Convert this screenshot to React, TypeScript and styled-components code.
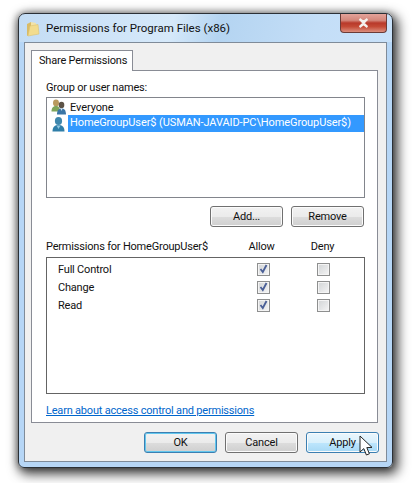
import React from "react";
import styled, { createGlobalStyle } from "styled-components";

const GlobalStyle = createGlobalStyle`
  html, body {
    margin: 0;
    padding: 0;
    width: 414px;
    height: 483px;
    overflow: hidden;
    background: #fff;
    font-family: Roboto, "Open Sans", sans-serif;
    font-size: 11px;
    letter-spacing: -0.2px;
    color: #111;
  }
`;

const Page = styled.div`
  padding: 13px 21px 15px 18px;
  width: 375px;
  height: 455px;
`;

const Frame = styled.div`
  box-sizing: border-box;
  width: 375px;
  height: 455px;
  display: flex;
  flex-direction: column;
  padding: 0 5px 5px 5px;
  border: 1px solid #2b3036;
  border-radius: 7px 7px 6px 6px;
  background:
    linear-gradient(#0000 0, #0000 28px, #b6d6f6 28px),
    linear-gradient(104deg, #c3dcf4 0%, #d6e9fa 32%, #b4d4f1 42%, #c4def7 62%, #cfe5fb 100%);
  box-shadow: 3px 4px 12px 2px rgba(0, 0, 0, 0.75), -1px 0 7px rgba(0, 0, 0, 0.35);
`;

const TitleBar = styled.div`
  height: 28px;
  flex: none;
  display: flex;
  align-items: flex-start;
  gap: 6px;
`;

const TitleIcon = styled.svg`
  width: 14px;
  height: 16px;
  margin: 7px 0 0 2px;
`;

const TitleText = styled.div`
  margin-top: 7px;
  font-size: 11.5px;
  letter-spacing: 0;
  white-space: nowrap;
`;

const CloseButton = styled.div`
  margin-left: auto;
  width: 47px;
  height: 19px;
  box-sizing: border-box;
  border: 1px solid #6b3b37;
  border-top: none;
  border-radius: 0 0 4px 4px;
  background: linear-gradient(#e4a39a 0%, #d4877b 35%, #b8392a 50%, #c44a36 70%, #dc8f7e 100%);
  display: flex;
  align-items: center;
  justify-content: center;
`;

const Client = styled.div`
  flex: 1;
  box-sizing: border-box;
  border: 1px solid #7f8b99;
  background: #f0f0f0;
  padding: 7px 7px 0 6px;
  display: flex;
  flex-direction: column;
  position: relative;
`;

const Tab = styled.div`
  align-self: flex-start;
  flex: none;
  box-sizing: border-box;
  width: 102px;
  height: 21px;
  margin-bottom: -1px;
  padding: 2px 0 0 7px;
  line-height: 16px;
  background: #fff;
  border: 1px solid #898c95;
  border-bottom: none;
  position: relative;
  z-index: 1;
  white-space: nowrap;
`;

const TabPanel = styled.div`
  box-sizing: border-box;
  flex: none;
  height: 353px;
  margin-right: 1px;
  background: #fff;
  border: 1px solid #898c95;
  padding: 9px 12px 0 14px;
  display: flex;
  flex-direction: column;
`;

const FieldLabel = styled.div`
  flex: none;
  height: 17px;
  line-height: 15px;
`;

const NamesList = styled.div`
  box-sizing: border-box;
  flex: none;
  height: 101px;
  border: 1px solid #82858c;
  padding: 1px 0 0 4px;
  display: flex;
  flex-direction: column;
`;

const NameRow = styled.div`
  flex: none;
  height: 16.5px;
  display: flex;
  align-items: center;
  gap: 1px;
`;

const NameIcon = styled.svg`
  width: 16px;
  height: 16px;
  flex: none;
`;

const NameText = styled.div<{ $selected?: boolean }>`
  flex: ${(p) => (p.$selected ? 1 : "none")};
  height: 17px;
  line-height: ${(p) => (p.$selected ? 16 : 18)}px;
  padding-left: 2px;
  letter-spacing: -0.1px;
  white-space: nowrap;
  background: ${(p) => (p.$selected ? "#3399ff" : "transparent")};
  color: ${(p) => (p.$selected ? "#fff" : "#111")};
`;

const ButtonRow = styled.div<{ $top: number; $right?: number }>`
  display: flex;
  flex: none;
  justify-content: flex-end;
  gap: 8px;
  margin-top: ${(p) => p.$top}px;
  margin-right: ${(p) => p.$right ?? 0}px;
`;

const Button = styled.div<{ $state?: "default" | "hover" }>`
  box-sizing: border-box;
  width: 73px;
  height: 21px;
  border-radius: 3px;
  display: flex;
  align-items: center;
  justify-content: center;
  border: 1px solid ${(p) => (p.$state ? "#3c7fb1" : "#707070")};
  box-shadow: inset 0 0 0 1px ${(p) => (p.$state === "default" ? "#62c7ee" : "#fbfbfb")};
  background: ${(p) =>
    p.$state === "hover"
      ? "linear-gradient(#eaf6fd 0%, #d9f0fc 50%, #bee6fd 50%, #a7d9f5 100%)"
      : "linear-gradient(#f2f2f2 0%, #ebebeb 50%, #dddddd 50%, #cfcfcf 100%)"};
`;

const PermHeader = styled.div`
  display: grid;
  flex: none;
  grid-template-columns: 1fr 61px 61px;
  padding-right: 12px;
  height: 18px;
  line-height: 15px;
  margin-top: 12px;
  white-space: nowrap;
`;

const PermList = styled.div`
  box-sizing: border-box;
  flex: none;
  height: 137px;
  border: 1px solid #646464;
  padding: 2px 11px 0 11px;
`;

const PermRow = styled.div`
  display: grid;
  grid-template-columns: 1fr 60px 60px;
  align-items: center;
  height: 18px;
`;

const Centered = styled.div`
  display: flex;
  justify-content: center;
`;

const CheckBox = styled.div`
  box-sizing: border-box;
  width: 13px;
  height: 13px;
  border: 1px solid #8e8f8f;
  box-shadow: inset 0 0 0 1px #f4f4f4;
  background: linear-gradient(135deg, #d2d4d6 0%, #e6e7e8 60%, #f6f6f6 100%);
  display: flex;
  align-items: center;
  justify-content: center;
`;

const HelpLink = styled.a`
  flex: none;
  margin-top: 9px;
  line-height: 16px;
  color: #0066cc;
  text-decoration: underline;
  white-space: nowrap;
`;

const Pointer = styled.svg`
  position: absolute;
  left: 334px;
  top: 392px;
  width: 16px;
  height: 23px;
`;

const FolderIcon = () => (
  <TitleIcon viewBox="0 0 14 16">
    <path d="M1 3 L5 1 L5 13 L1 15 Z" fill="#d9bb66" />
    <path d="M5 1 L10 2 L10 13 L5 13 Z" fill="#f3e3a8" />
    <path d="M4 5 L12 3.5 L13 13 L2 15 Z" fill="#f2dc8e" stroke="#dcc272" strokeWidth="0.6" />
  </TitleIcon>
);

const SingleUserIcon = () => (
  <NameIcon viewBox="0 0 16 16">
    <ellipse cx="7.5" cy="5" rx="3.6" ry="4" fill="#3f87ad" />
    <path d="M1.5 15.5 C1.5 10.5 4 9 7.5 9 C11 9 13.5 10.5 13.5 15.5 Z" fill="#2f7ea8" />
    <path d="M5.5 9.5 L7.5 13 L9.5 9.5 Z" fill="#8fc6df" />
  </NameIcon>
);

const GroupIcon = () => (
  <NameIcon viewBox="0 0 16 16">
    <ellipse cx="5" cy="4" rx="3" ry="3.4" fill="#b99a5e" />
    <path d="M0.5 12.5 C0.5 8.5 2.5 7 5 7 C7.5 7 9 8.5 9 12.5 Z" fill="#7fa55a" />
    <ellipse cx="10.5" cy="6" rx="2.8" ry="3.2" fill="#5d5346" />
    <path d="M6 15.5 C6 11 8 9.5 10.5 9.5 C13 9.5 15 11 15 15.5 Z" fill="#3b76a6" />
    <path d="M9.5 9.5 L10.5 12 L11.5 9.5 Z" fill="#dfe9f2" />
  </NameIcon>
);

const Tick = () => (
  <svg width="9" height="10" viewBox="0 0 9 10">
    <path d="M1.5 5 L3.8 8 L7.5 1" fill="none" stroke="#4a5f97" strokeWidth="1.8" />
  </svg>
);

const permissions = ["Full Control", "Change", "Read"];

export default function App() {
  return (
    <Page>
      <GlobalStyle />
      <Frame>
        <TitleBar>
          <FolderIcon />
          <TitleText>Permissions for Program Files (x86)</TitleText>
          <CloseButton>
            <svg width="13" height="10" viewBox="0 0 13 10">
              <path
                d="M2.5 1 L6.5 4 L10.5 1 M2.5 9 L6.5 6 L10.5 9 M3 1.2 L10 8.8 M10 1.2 L3 8.8"
                fill="none"
                stroke="#f4f1ee"
                strokeWidth="2.2"
              />
            </svg>
          </CloseButton>
        </TitleBar>
        <Client>
          <Tab>Share Permissions</Tab>
          <TabPanel>
            <FieldLabel>Group or user names:</FieldLabel>
            <NamesList>
              <NameRow>
                <GroupIcon />
                <NameText>Everyone</NameText>
              </NameRow>
              <NameRow>
                <SingleUserIcon />
                <NameText $selected>HomeGroupUser$ (USMAN-JAVAID-PC\HomeGroupUser$)</NameText>
              </NameRow>
            </NamesList>
            <ButtonRow $top={8} $right={1}>
              <Button>Add...</Button>
              <Button>Remove</Button>
            </ButtonRow>
            <PermHeader>
              <div>Permissions for HomeGroupUser$</div>
              <Centered>Allow</Centered>
              <Centered>Deny</Centered>
            </PermHeader>
            <PermList>
              {permissions.map((name) => (
                <PermRow key={name}>
                  <div>{name}</div>
                  <Centered>
                    <CheckBox>
                      <Tick />
                    </CheckBox>
                  </Centered>
                  <Centered>
                    <CheckBox />
                  </Centered>
                </PermRow>
              ))}
            </PermList>
            <HelpLink>Learn about access control and permissions</HelpLink>
          </TabPanel>
          <ButtonRow $top={9}>
            <Button $state="default">OK</Button>
            <Button>Cancel</Button>
            <Button $state="hover">Apply</Button>
          </ButtonRow>
          <Pointer viewBox="0 0 16 23">
            <path
              d="M1 1 L1 17 L4.8 13.6 L7.4 20 L10.4 18.8 L7.8 12.6 L13 12.4 Z"
              fill="#fff"
              stroke="#222"
              strokeWidth="1"
            />
          </Pointer>
        </Client>
      </Frame>
    </Page>
  );
}
